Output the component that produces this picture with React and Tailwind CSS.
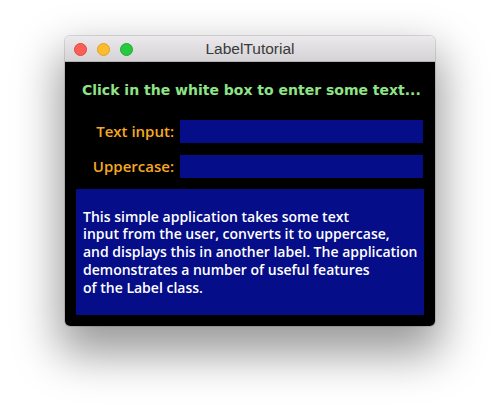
export default function App() {
  const font = { fontFamily: '"DejaVu Sans", Verdana, sans-serif' };
  const body = { fontFamily: '"Open Sans", "DejaVu Sans", sans-serif' };

  return (
    <div className="w-[500px] h-[419px] bg-white pt-[36px] pl-[65px] overflow-hidden">
      {/* Window */}
      <div className="w-[370px] h-[290px] flex flex-col rounded-[5px] overflow-hidden shadow-[0_0_0_1px_rgba(0,0,0,0.12),0_22px_45px_6px_rgba(0,0,0,0.4)]">
        {/* Title bar */}
        <div className="relative h-[26px] flex items-center justify-center bg-gradient-to-b from-[#ebe9eb] to-[#d5d3d5] border-b border-[#b3b1b3]">
          <div className="absolute left-[9px] top-[7px] flex gap-[10px]">
            <div className="w-[13px] h-[13px] rounded-full bg-[#fc5f57] border border-[#e0443e]"></div>
            <div className="w-[13px] h-[13px] rounded-full bg-[#fdbc2e] border border-[#dea123]"></div>
            <div className="w-[13px] h-[13px] rounded-full bg-[#28c840] border border-[#1aab29]"></div>
          </div>
          <span className="text-[15.5px] text-[#3a3a3a] font-['Liberation_Sans',Arial,sans-serif]">LabelTutorial</span>
        </div>

        {/* Content */}
        <div className="flex-1 bg-black flex flex-col px-[11px] pb-[11px]">
          <div className="pt-[19px] pl-[6px] text-[14px] leading-[18px] font-bold text-[#8ee486]" style={font}>
            Click in the white box to enter some text...
          </div>

          <div className="mt-[21px] flex items-center" style={body}>
            <span className="w-[104px] text-right pr-[6px] text-[15px] font-semibold text-[#f7a823]">Text input:</span>
            <div className="flex-1 h-[23px] bg-[#050d88] mr-[1px]"></div>
          </div>
          <div className="mt-[12px] flex items-center" style={body}>
            <span className="w-[104px] text-right pr-[6px] text-[15px] font-semibold text-[#f7a823]">Uppercase:</span>
            <div className="flex-1 h-[23px] bg-[#050d88] mr-[1px]"></div>
          </div>

          <div className="mt-[11px] flex-1 bg-[#050d88] flex items-center pl-[7px]">
            <p className="text-[14px] leading-[17.7px] font-semibold text-white whitespace-pre" style={body}>
              {`This simple application takes some text
input from the user, converts it to uppercase,
and displays this in another label. The application
demonstrates a number of useful features
of the Label class.`}
            </p>
          </div>
        </div>
      </div>
    </div>
  );
}
